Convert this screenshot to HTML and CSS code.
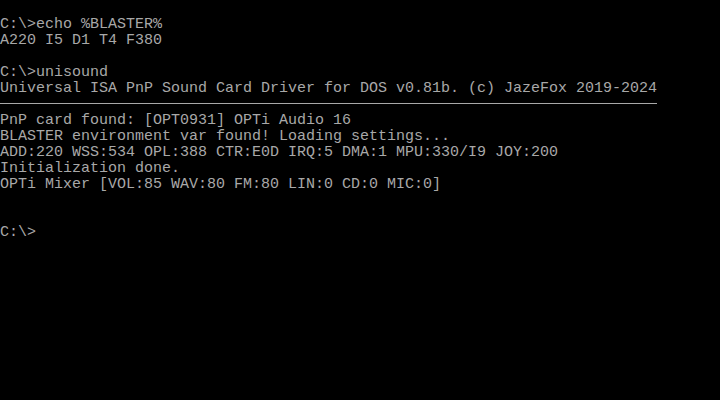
FILE: index.html
```html
<!DOCTYPE html>
<html lang="en">
<head>
    <meta charset="UTF-8">
    <title>DOS - unisound</title>
    <link rel="stylesheet" href="styles.css">
</head>
<body>
    <div class="screen">
        <div class="blank"></div>
<pre class="text">C:\>echo %BLASTER%
A220 I5 D1 T4 F380

C:\>unisound
Universal ISA PnP Sound Card Driver for DOS v0.81b. (c) JazeFox 2019-2024</pre>
        <div class="rule"></div>
<pre class="text">PnP card found: [OPT0931] OPTi Audio 16
BLASTER environment var found! Loading settings...
ADD:220 WSS:534 OPL:388 CTR:E0D IRQ:5 DMA:1 MPU:330/I9 JOY:200
Initialization done.
OPTi Mixer [VOL:85 WAV:80 FM:80 LIN:0 CD:0 MIC:0]


C:\></pre>
    </div>
</body>
</html>
```

FILE: styles.css
```css
* {
    margin: 0;
    padding: 0;
    box-sizing: border-box;
}

:root {
    --background: #000000;
    --text: #a8a8a8;
}

body {
    background-color: var(--background);
    width: 720px;
    height: 400px;
    overflow: hidden;
}

.screen {
    padding-top: 1px;
    color: var(--text);
    font-family: "Liberation Mono", "DejaVu Sans Mono", monospace;
    font-size: 15px;
    line-height: 16px;
}

.text {
    font: inherit;
    white-space: pre;
}

/* an empty text row */
.blank {
    height: 16px;
}

/* box-drawing line, one text row high */
.rule {
    width: 73ch;
    height: 16px;
    padding-top: 6px;
}

.rule::before {
    content: "";
    display: block;
    border-top: 1px solid var(--text);
}
```
